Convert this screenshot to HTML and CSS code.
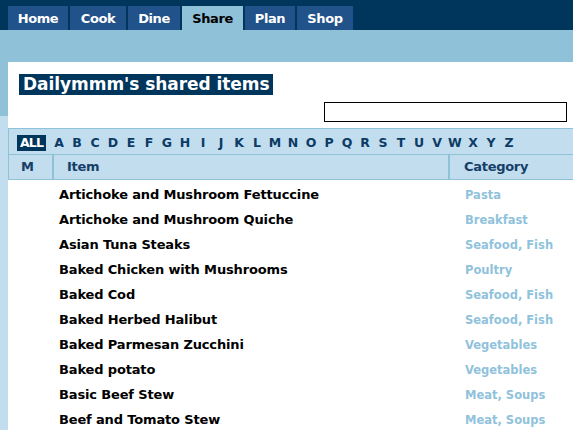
FILE: index.html
```html
<!DOCTYPE html>
<html>
<head>
<meta charset="utf-8">
<link rel="stylesheet" href="styles.css">
</head>
<body>
<div class="topbar">
  <nav class="tabs">
    <a class="tab">Home</a>
    <a class="tab">Cook</a>
    <a class="tab">Dine</a>
    <a class="tab active">Share</a>
    <a class="tab">Plan</a>
    <a class="tab">Shop</a>
  </nav>
</div>
<div class="band"></div>
<div class="page">
  <div class="content">
    <div class="panel">
      <h1 class="title">Dailymmm's shared items</h1>
      <div class="search-row"><input class="search" type="text"></div>
    </div>
    <div class="letters">
      <a class="all">ALL</a>
      <a class="l">A</a><a class="l">B</a><a class="l">C</a><a class="l">D</a><a class="l">E</a><a class="l">F</a><a class="l">G</a><a class="l">H</a><a class="l">I</a><a class="l">J</a><a class="l">K</a><a class="l">L</a><a class="l">M</a><a class="l">N</a><a class="l">O</a><a class="l">P</a><a class="l">Q</a><a class="l">R</a><a class="l">S</a><a class="l">T</a><a class="l">U</a><a class="l">V</a><a class="l">W</a><a class="l">X</a><a class="l">Y</a><a class="l">Z</a>
    </div>
    <div class="thead">
      <div class="h-m">M</div>
      <div class="h-item">Item</div>
      <div class="h-cat">Category</div>
    </div>
    <div class="rows">
      <div class="row"><div class="c-m"></div><div class="c-item">Artichoke and Mushroom Fettuccine</div><div class="c-cat">Pasta</div></div>
      <div class="row"><div class="c-m"></div><div class="c-item">Artichoke and Mushroom Quiche</div><div class="c-cat">Breakfast</div></div>
      <div class="row"><div class="c-m"></div><div class="c-item">Asian Tuna Steaks</div><div class="c-cat">Seafood, Fish</div></div>
      <div class="row"><div class="c-m"></div><div class="c-item">Baked Chicken with Mushrooms</div><div class="c-cat">Poultry</div></div>
      <div class="row"><div class="c-m"></div><div class="c-item">Baked Cod</div><div class="c-cat">Seafood, Fish</div></div>
      <div class="row"><div class="c-m"></div><div class="c-item">Baked Herbed Halibut</div><div class="c-cat">Seafood, Fish</div></div>
      <div class="row"><div class="c-m"></div><div class="c-item">Baked Parmesan Zucchini</div><div class="c-cat">Vegetables</div></div>
      <div class="row"><div class="c-m"></div><div class="c-item">Baked potato</div><div class="c-cat">Vegetables</div></div>
      <div class="row"><div class="c-m"></div><div class="c-item">Basic Beef Stew</div><div class="c-cat">Meat, Soups</div></div>
      <div class="row"><div class="c-m"></div><div class="c-item">Beef and Tomato Stew</div><div class="c-cat">Meat, Soups</div></div>
    </div>
  </div>
</div>
</body>
</html>
```
FILE: styles.css
```css
html, body {
  margin: 0;
  padding: 0;
}
body {
  width: 573px;
  overflow: hidden;
  background: #fff;
  font-family: "DejaVu Sans", Verdana, sans-serif;
  font-weight: bold;
}
.topbar {
  height: 30px;
  background: #00355c;
  box-sizing: border-box;
  padding: 6px 0 0 8px;
}
.tabs {
  display: flex;
  gap: 2px;
  height: 24px;
}
.tab {
  display: flex;
  align-items: center;
  justify-content: center;
  height: 24px;
  background: #22528a;
  color: #fff;
  font-size: 13px;
  letter-spacing: -0.4px;
}
.tab:nth-child(1) { width: 60px; }
.tab:nth-child(2) { width: 56px; }
.tab:nth-child(3) { width: 52px; }
.tab:nth-child(4) { width: 61px; }
.tab:nth-child(5) { width: 50px; }
.tab:nth-child(6) { width: 56px; }
.tab.active {
  background: #8fc1d9;
  color: #000;
}
.band {
  height: 32px;
  background: #8fc1d9;
}
.page {
  padding-left: 8px;
  background: linear-gradient(to bottom, #8fc1d9 0, #8fc1d9 54px, #c1ddee 54px);
}
.content {
  background: #fff;
}
.panel {
  height: 66px;
  box-sizing: border-box;
  padding: 12px 6px 0 11px;
}
.title {
  display: inline-block;
  margin: 0;
  background: #00355c;
  color: #fff;
  font-size: 17px;
  line-height: 21px;
  padding: 0 3px 0 4px;
  letter-spacing: -0.05px;
}
.search-row {
  display: flex;
  justify-content: flex-end;
  margin-top: 7px;
}
.search {
  width: 243px;
  height: 20px;
  box-sizing: border-box;
  border: 1px solid #000;
  margin: 0;
  padding: 0;
  background: #fff;
}
.letters {
  height: 26px;
  box-sizing: border-box;
  border-top: 1px solid #8fc1d9;
  border-left: 1px solid #8fc1d9;
  background: #c1ddee;
  display: flex;
  align-items: center;
  padding: 2px 0 0 8px;
  font-size: 12.5px;
}
.all {
  background: #00355c;
  color: #fff;
  height: 16px;
  width: 29px;
  line-height: 16px;
  text-align: center;
  letter-spacing: -0.8px;
  margin-right: 4px;
}
.l {
  width: 18px;
  text-align: center;
  color: #0c3b66;
}
.thead {
  display: flex;
  height: 26px;
  box-sizing: border-box;
  border-top: 1px solid #8fc1d9;
  border-bottom: 1px solid #8fc1d9;
  border-left: 1px solid #8fc1d9;
  background: #c1ddee;
  color: #163f68;
  font-size: 13px;
  letter-spacing: -0.3px;
  line-height: 24px;
}
.h-m {
  width: 45px;
  box-sizing: border-box;
  border-right: 2px solid #8fc1d9;
  padding-left: 12px;
}
.h-item {
  width: 396px;
  box-sizing: border-box;
  border-right: 2px solid #8fc1d9;
  padding-left: 13px;
}
.h-cat {
  flex: 1;
  padding-left: 14px;
}
.rows {
  padding-top: 2px;
}
.row {
  display: flex;
  height: 25px;
  align-items: center;
}
.c-m {
  width: 51px;
}
.c-item {
  width: 406px;
  color: #000;
  font-size: 13px;
  letter-spacing: -0.15px;
}
.c-cat {
  flex: 1;
  color: #90c2dc;
  font-size: 11.5px;
}
```
